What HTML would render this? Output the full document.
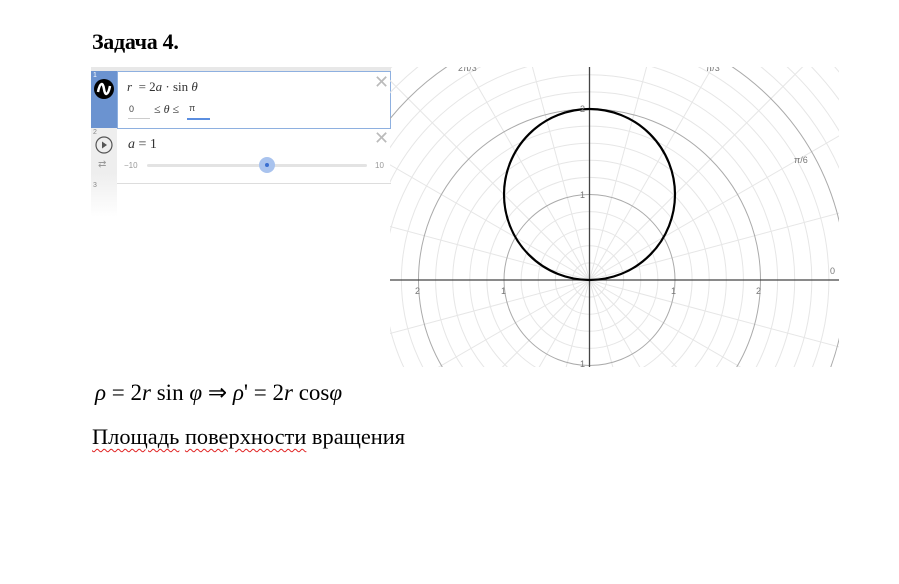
<!DOCTYPE html>
<html><head><meta charset="utf-8"><style>
body{margin:0;width:899px;height:584px;background:#fff;position:relative;overflow:hidden;font-family:"Liberation Serif","Times New Roman",serif;}
.t{position:absolute;white-space:nowrap;color:#000}
.wavy{text-decoration:underline wavy #e02020;text-decoration-thickness:1px;text-underline-offset:4px}
</style></head><body>
<div class="t" style="left:92px;top:29px;font-size:22px;font-weight:bold;letter-spacing:-0.3px">Задача 4.</div>

<div style="position:absolute;left:91px;top:67px;width:300px;height:150px;background:#fff;overflow:hidden">
 <div style="position:absolute;left:0;top:0;width:300px;height:4px;background:#e8e8e8"></div>
 <div style="position:absolute;left:0;top:4px;width:26px;height:146px;background:linear-gradient(#eee 70%,#fff)"></div>
 <div style="position:absolute;left:0;top:4px;width:26px;height:57px;background:#6b93d0"></div>
 <div style="position:absolute;left:26px;top:4px;width:272px;height:56px;border:1px solid #8eb0e0;background:#fff"></div>
 <div style="position:absolute;left:26px;top:116px;width:274px;height:1px;background:#ddd"></div>
 <div style="position:absolute;left:2px;top:5px;font:7px 'Liberation Sans';color:#fff">1</div>
 <div style="position:absolute;left:2px;top:62px;font:7px 'Liberation Sans';color:#888">2</div>
 <div style="position:absolute;left:2px;top:115px;font:7px 'Liberation Sans';color:#888">3</div>
 <svg style="position:absolute;left:3px;top:12px" width="20" height="20"><circle cx="10" cy="10" r="10" fill="#000"/><path d="M4 13 C6 3,9 3,10 10 C11 17,14 17,16 7" stroke="#fff" stroke-width="2.5" fill="none"/></svg>
 <div class="t" style="left:36px;top:12px;font-size:13px;color:#333"><i>r</i> &nbsp;= 2<i>a</i> · sin <i>θ</i></div>
 <div class="t" style="left:38px;top:37px;font:9px 'Liberation Sans';color:#444">0</div>
 <div style="position:absolute;left:37px;top:51px;width:22px;height:1px;background:#ccc"></div>
 <div class="t" style="left:63px;top:35px;font-size:12px;color:#333">≤ <i>θ</i> ≤</div>
 <div class="t" style="left:98px;top:36px;font:9px 'Liberation Sans';color:#444">π</div>
 <div style="position:absolute;left:96px;top:51px;width:23px;height:2px;background:#5b8ee0"></div>
 <div class="t" style="left:283px;top:5px;font:18px 'Liberation Sans';color:#bbb">✕</div>
 <div class="t" style="left:283px;top:61px;font:18px 'Liberation Sans';color:#bbb">✕</div>
 <svg style="position:absolute;left:4px;top:69px" width="18" height="18"><circle cx="9" cy="9" r="8" fill="none" stroke="#555" stroke-width="1.2"/><path d="M7 5.5 L12 9 L7 12.5Z" fill="#555"/></svg>
 <div class="t" style="left:7px;top:92px;font:10px 'Liberation Sans';color:#999">⇄</div>
 <div class="t" style="left:37px;top:70px;font-size:14px;color:#333"><i>a</i> = 1</div>
 <div class="t" style="left:33px;top:94px;font:8px 'Liberation Sans';color:#999">−10</div>
 <div style="position:absolute;left:56px;top:97px;width:220px;height:3px;border-radius:2px;background:#e3e3e3"></div>
 <div style="position:absolute;left:168px;top:90px;width:16px;height:16px;border-radius:50%;background:#a9c3ee"></div>
 <div style="position:absolute;left:174px;top:96px;width:4px;height:4px;border-radius:50%;background:#3a6fd0"></div>
 <div class="t" style="left:284px;top:94px;font:8px 'Liberation Sans';color:#999">10</div>
</div>

<svg id="g" style="position:absolute;left:390px;top:67px;overflow:hidden" width="449" height="300"></svg>

<div class="t" style="left:95px;top:380px;font-size:23px"><i>ρ</i> = 2<i>r</i> sin <i>φ</i> ⇒ <i>ρ</i>' = 2<i>r</i> cos<i>φ</i></div>
<div class="t" style="left:92px;top:424px;font-size:22.4px"><span class="wavy">Площадь</span> <span class="wavy">поверхности</span> вращения</div>

<script>
var s='',ox=199.5,oy=213,u=85.5;
for(var k=0;k<24;k++){var a=k*Math.PI/12;s+='<line x1="'+ox+'" y1="'+oy+'" x2="'+(ox+600*Math.cos(a))+'" y2="'+(oy-600*Math.sin(a))+'" stroke="#e6e6e6" stroke-width="1"/>';}
for(var i=1;i<=25;i++){var r=i*0.2*u;var maj=i%5==0;s+='<circle cx="'+ox+'" cy="'+oy+'" r="'+r+'" fill="none" stroke="'+(maj?'#aaa':'#e6e6e6')+'" stroke-width="1"/>';}
s+='<line x1="0" y1="'+oy+'" x2="449" y2="'+oy+'" stroke="#444" stroke-width="1.3"/>';
s+='<line x1="'+ox+'" y1="0" x2="'+ox+'" y2="300" stroke="#444" stroke-width="1.3"/>';
s+='<circle cx="'+ox+'" cy="'+(oy-u)+'" r="'+u+'" fill="none" stroke="#000" stroke-width="2.2"/>';
var L=[[25,227,'2'],[111,227,'1'],[281,227,'1'],[366,227,'2'],[190,131,'1'],[190,45,'2'],[190,300,'1'],[440,207,'0'],[404,96,'π/6'],[316,4,'π/3'],[68,4,'2π/3']];
L.forEach(function(l){s+='<text x="'+l[0]+'" y="'+l[1]+'" font-family="Liberation Sans" font-size="9" fill="#777">'+l[2]+'</text>';});
document.getElementById('g').innerHTML=s;
</script>
</body></html>
